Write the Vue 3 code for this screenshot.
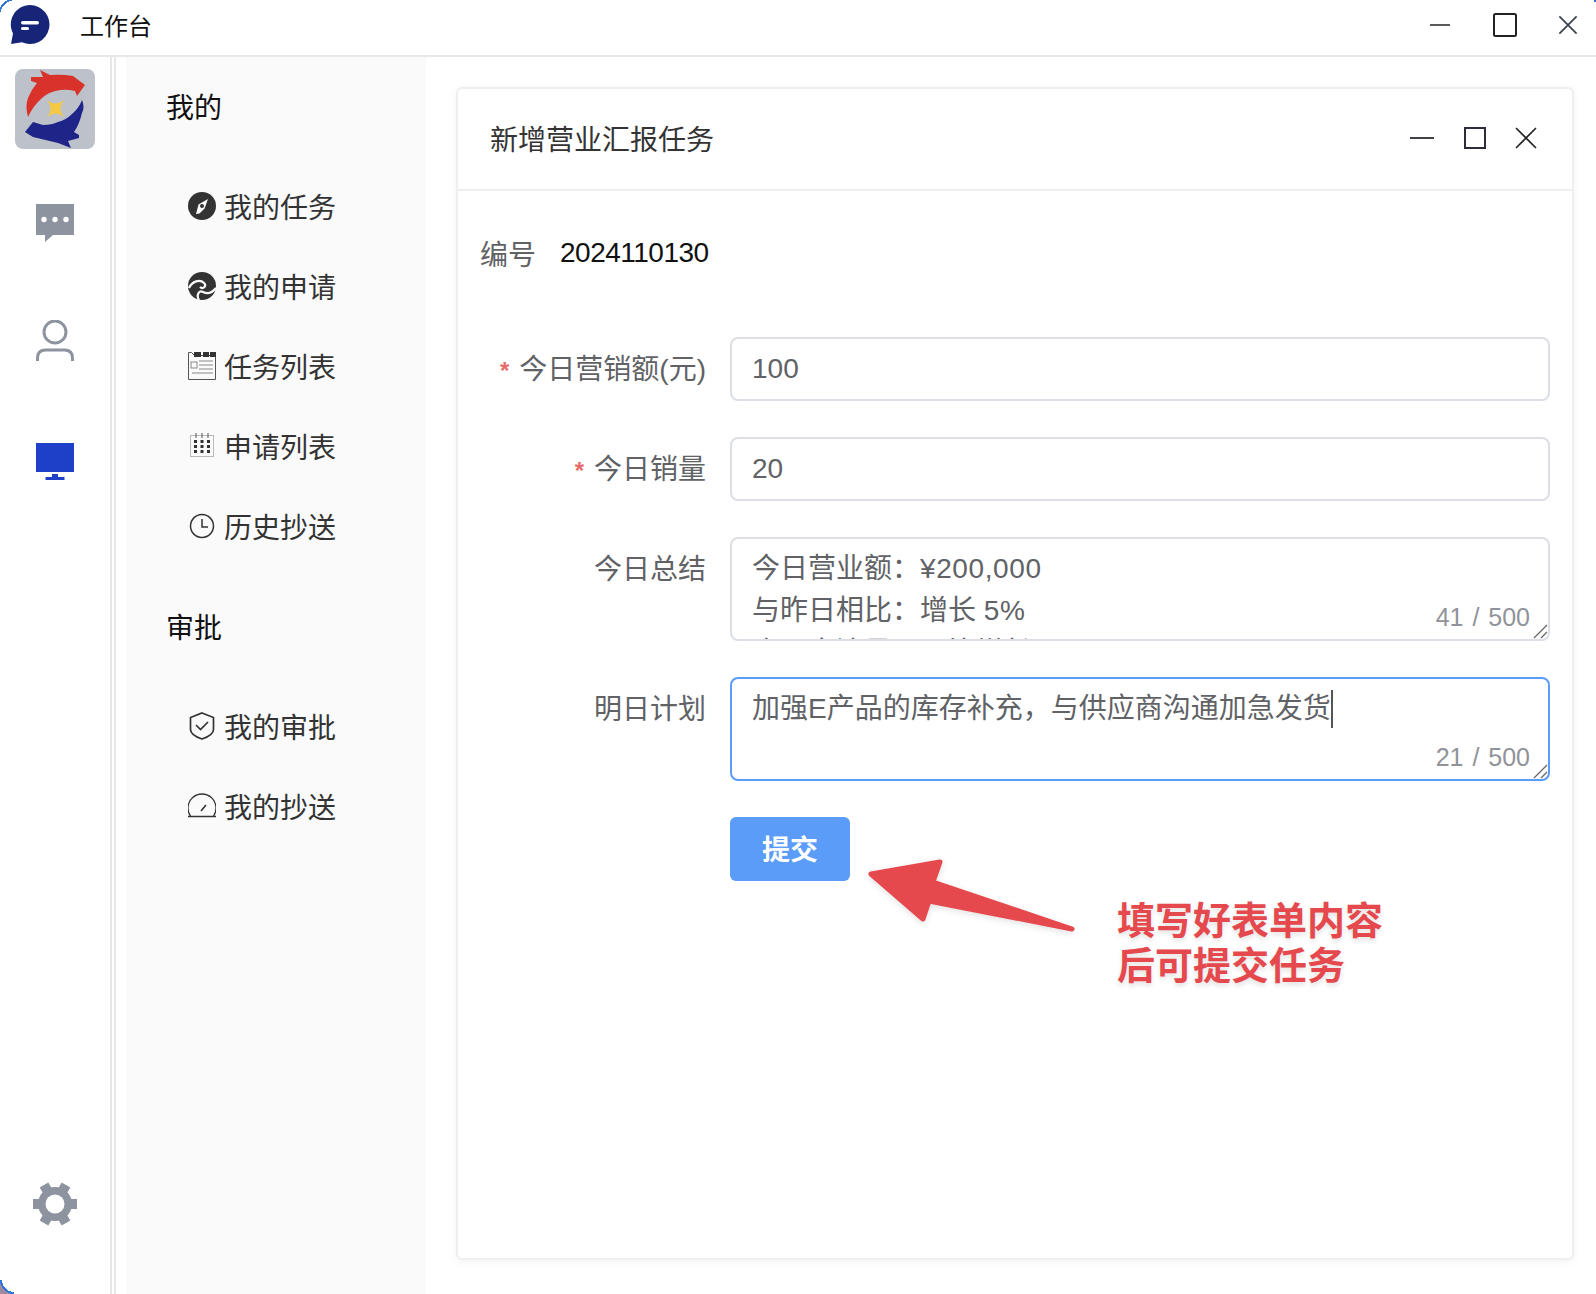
<script setup>
const mine = [
  { label: "我的任务", icon: "compass" },
  { label: "我的申请", icon: "swirl" },
  { label: "任务列表", icon: "list" },
  { label: "申请列表", icon: "calendar" },
  { label: "历史抄送", icon: "clock" },
];
const approval = [
  { label: "我的审批", icon: "shield" },
  { label: "我的抄送", icon: "gauge" },
];
const groups = [
  { title: "我的", items: mine },
  { title: "审批", items: approval },
];
</script>

<template>
  <div class="window">
    <header class="titlebar">
      <svg class="app-logo" viewBox="0 0 40 40">
        <path d="M20 0a19.500 19.500 0 1 1-8 37.300L1 39l2-10.500A19.500 19.500 0 0 1 20 0z" fill="#172578" />
        <rect x="11" y="16" width="18" height="3.400" rx="1.700" fill="#fff" />
        <rect x="11" y="22" width="8" height="3" rx="1.500" fill="#fff" />
      </svg>
      <span class="app-name">工作台</span>
      <div class="win-controls">
        <svg class="ctl ctl-min" viewBox="0 0 26 26"><path d="M3 13h20" stroke="#222" stroke-width="1.500" /></svg>
        <svg class="ctl" viewBox="0 0 26 26"><rect x="2" y="2" width="22" height="22" rx="1.500" fill="none" stroke="#222" stroke-width="2" /></svg>
        <svg class="ctl ctl-close" viewBox="0 0 26 26"><path d="M5 5l16 16M21 5L5 21" stroke="#3a4150" stroke-width="1.600" /></svg>
      </div>
    </header>

    <div class="main">
      <aside class="rail">
        <svg class="avatar" viewBox="15 69 80 80">
          <rect x="15" y="69" width="80" height="80" rx="8" fill="#bdc1ca" />
          <path d="M40 70L50 75Q62 74 73 76L85 85L77 96L75 91Q67 89 60 90Q48 92 42 98Q33 106 28 117Q25 106 28 98Q31 90 37 83L31 81V77L43 77z" fill="#d8322a" />
          <path d="M82 100Q85 107 82 113Q79 125 74 132L79 135V138L68 141L71 148L58 143L33 137L25 132L33 122L43 125Q52 125 58 122Q66 120 72 114Q79 108 82 100z" fill="#1e2488" />
          <path d="M47 100Q55.500 107 64 100Q57 108.500 64 117Q55.500 110 47 117Q54 108.500 47 100z" fill="#f6c944" />
        </svg>
        <svg class="rail-icon chat" viewBox="0 0 38 40">
          <path d="M0 0h38v31H17l-8 7v-7H0z" fill="#8d949f" />
          <circle cx="8" cy="15.500" r="2.700" fill="#fff" /><circle cx="19" cy="15.500" r="2.700" fill="#fff" /><circle cx="30" cy="15.500" r="2.700" fill="#fff" />
        </svg>
        <svg class="rail-icon user" viewBox="0 0 38 42">
          <circle cx="19" cy="12" r="11" fill="none" stroke="#8d949f" stroke-width="3" />
          <path d="M1.500 41v-3q0-8 8-8h19q8 0 8 8v3" fill="none" stroke="#8d949f" stroke-width="3" />
        </svg>
        <svg class="rail-icon monitor" viewBox="0 0 38 38">
          <rect width="38" height="29" fill="#1e40c8" />
          <path d="M16 31h6v3h6.500v3h-19v-3H16z" fill="#1e40c8" />
        </svg>
        <svg class="rail-icon gear" viewBox="0 0 44 44">
          <g fill="#8d949f">
            <rect x="0" y="17" width="44" height="10" />
            <rect x="0" y="17" width="44" height="10" transform="rotate(60 22 22)" />
            <rect x="0" y="17" width="44" height="10" transform="rotate(120 22 22)" />
            <circle cx="22" cy="22" r="17" />
          </g>
          <circle cx="22" cy="22" r="9.500" fill="#fff" />
        </svg>
      </aside>
      <div class="divider"></div>

      <nav class="sidebar">
        <section v-for="group in groups" :key="group.title" class="group">
          <h3 class="group-title">{{ group.title }}</h3>
          <a v-for="item in group.items" :key="item.label" class="nav-item">
            <svg class="nav-icon" viewBox="0 0 28 28">
              <template v-if="item.icon === 'compass'">
                <circle cx="14" cy="14" r="14" fill="#333" />
                <path d="M20 7l-3.500 9.500-5 5L8 22l2.500-9.500z" fill="#fff" />
                <circle cx="14" cy="14" r="2" fill="#333" />
              </template>
              <template v-else-if="item.icon === 'swirl'">
                <circle cx="14" cy="14" r="14" fill="#333" />
                <path d="M1 16C4 9 12 7 16 11C19 14 15 18 12 15" fill="none" stroke="#fafafa" stroke-width="2.200" />
                <path d="M11 28C8 23 11 18 15 20C19 22 24 21 28 16" fill="none" stroke="#fafafa" stroke-width="2.200" />
              </template>
              <template v-else-if="item.icon === 'list'">
                <path d="M.5 27.500V.5h3l3 3h21v24z" fill="none" stroke="#555" stroke-width="1" />
                <path d="M6 0h7v5H6zM15 0h6v5h-6zM22 0h6v5h-6z" fill="#333" />
                <rect x="3" y="10" width="6" height="6" fill="none" stroke="#888" />
                <path d="M11 9h14M11 13h14M11 17h14M4 21h21" stroke="#888" stroke-width="1.200" />
              </template>
              <template v-else-if="item.icon === 'calendar'">
                <rect x="2.500" y="3.500" width="23" height="21" fill="none" stroke="#bbb" />
                <path d="M8 1v5M14 1v5M20 1v5" stroke="#555" />
                <path d="M6 8h3v3H6zM12.500 8h3v3h-3zM19 8h3v3h-3zM6 13h3v3H6zM12.500 13h3v3h-3zM19 13h3v3h-3zM6 18h3v3H6zM12.500 18h3v3h-3zM19 18h3v3h-3z" fill="#333" />
              </template>
              <template v-else-if="item.icon === 'clock'">
                <circle cx="14" cy="14" r="11.500" fill="none" stroke="#333" stroke-width="1.500" />
                <path d="M14 7v8h6" fill="none" stroke="#333" stroke-width="1.500" />
              </template>
              <template v-else-if="item.icon === 'shield'">
                <path d="M14 1l11.500 4.500v12c0 4-4 7-11.500 9.500C6.500 24.500 2.500 21.500 2.500 17.500v-12z" fill="none" stroke="#333" stroke-width="1.700" />
                <path d="M8 13l4.500 4.500L20 10" fill="none" stroke="#333" stroke-width="1.700" />
              </template>
              <template v-else>
                <path d="M2.500 24A14 14 0 1 1 25.500 24" fill="none" stroke="#333" stroke-width="1.300" />
                <path d="M0 24.500h28" stroke="#333" stroke-width="1.500" />
                <path d="M13 19l5-6" stroke="#333" stroke-width="1.600" />
              </template>
            </svg>
            <span>{{ item.label }}</span>
          </a>
        </section>
      </nav>

      <main class="content">
        <div class="card">
          <div class="card-head">
            <span class="card-title">新增营业汇报任务</span>
            <div class="card-controls">
              <svg class="card-ctl card-min" viewBox="0 0 24 24"><path d="M0 12h24" stroke="#2c2c3a" stroke-width="1.800" /></svg>
              <svg class="card-ctl" viewBox="0 0 24 24"><rect x="2" y="2" width="20" height="20" fill="none" stroke="#2c2c3a" stroke-width="2" /></svg>
              <svg class="card-ctl" viewBox="0 0 24 24"><path d="M2 2l20 20M22 2L2 22" stroke="#222" stroke-width="1.600" /></svg>
            </div>
          </div>
          <div class="card-body">
            <div class="serial"><span class="serial-label">编号</span><span class="serial-no">2024110130</span></div>
            <form class="form" @submit.prevent>
              <div class="row">
                <label class="label required">今日营销额(元)</label>
                <div class="input">100</div>
              </div>
              <div class="row">
                <label class="label required">今日销量</label>
                <div class="input">20</div>
              </div>
              <div class="row">
                <label class="label">今日总结</label>
                <div class="textarea">
                  <div class="textarea-text">
                    <div>今日营业额：<span class="num">¥200,000</span></div>
                    <div>与昨日相比：增长 <span class="num">5%</span></div>
                    <div>今日客流量：同比增长 10%</div>
                  </div>
                  <span class="count">41 / 500</span>
                  <svg class="grip" viewBox="0 0 16 16"><path d="M2 15L15 2M9 15l6-6" stroke="#666" stroke-width="1.300" /></svg>
                </div>
              </div>
              <div class="row">
                <label class="label">明日计划</label>
                <div class="textarea focused">
                  <div class="textarea-text">加强E产品的库存补充，与供应商沟通加急发货<span class="caret"></span></div>
                  <span class="count">21 / 500</span>
                  <svg class="grip" viewBox="0 0 16 16"><path d="M2 15L15 2M9 15l6-6" stroke="#666" stroke-width="1.300" /></svg>
                </div>
              </div>
              <div class="row">
                <span class="label"></span>
                <button class="submit" type="button">提交</button>
              </div>
            </form>
          </div>
        </div>
      </main>
    </div>

    <svg class="arrow" viewBox="860 850 225 90">
      <path d="M871 874L940 862L933 882L1072 929L929 901L923 919z" fill="#e5494d" stroke="#e5494d" stroke-width="5" stroke-linejoin="round" />
    </svg>
    <div class="note">填写好表单内容<br />后可提交任务</div>

    <div class="corner corner-tl"></div>
    <div class="corner corner-tr"></div>
    <div class="corner corner-bl"></div>
  </div>
</template>

<style>
html,
body {
  margin: 0;
  background: #fff;
}
</style>

<style scoped>
.window {
  position: relative;
  width: 1596px;
  height: 1294px;
  overflow: hidden;
  display: flex;
  flex-direction: column;
  background: #fff;
  font-family: "Liberation Sans", "Noto Sans CJK SC", sans-serif;
}

.titlebar {
  flex: none;
  height: 49px;
  padding: 0 14px 6px 10px;
  border-bottom: 2px solid #e8e8e8;
  display: flex;
  align-items: center;
}

.app-logo {
  width: 40px;
  height: 40px;
  margin-top: 1px;
}

.app-name {
  margin-left: 30px;
  font-size: 24px;
  color: #111;
}

.win-controls {
  margin-left: auto;
  display: flex;
  align-items: center;
  gap: 36px;
}

.ctl {
  width: 26px;
  height: 26px;
}

.ctl-min {
  margin-right: 3px;
}

.ctl-close {
  width: 28px;
  height: 28px;
}

.main {
  flex: 1;
  min-height: 0;
  display: flex;
}

.rail {
  flex: none;
  width: 110px;
  display: flex;
  flex-direction: column;
  align-items: center;
  padding-top: 12px;
  border-right: 2px solid #e8e8e8;
}

.avatar {
  width: 80px;
  height: 80px;
}

.rail-icon {
  width: 38px;
}

.chat {
  height: 40px;
  margin-top: 55px;
}

.user {
  height: 42px;
  margin-top: 76px;
}

.monitor {
  height: 38px;
  margin-top: 81px;
}

.gear {
  width: 44px;
  height: 44px;
  margin-top: auto;
  margin-bottom: 68px;
}

.divider {
  flex: none;
  width: 14px;
  background: linear-gradient(#e8e8e8, #e8e8e8) 2px 0 / 2px 100% no-repeat;
}

.sidebar {
  flex: none;
  width: 300px;
  background: #fafafa;
  padding: 32px 0 0 40px;
  box-sizing: border-box;
}

.group + .group {
  margin-top: 43px;
}

.group-title {
  margin: 0 0 37px;
  height: 40px;
  line-height: 40px;
  font-size: 28px;
  font-weight: 400;
  color: #111;
}

.nav-item {
  display: flex;
  align-items: center;
  height: 80px;
  margin-left: 22px;
  gap: 8px;
  font-size: 28px;
  color: #333;
}

.nav-icon {
  width: 28px;
  height: 28px;
  flex: none;
}

.content {
  flex: 1;
  min-width: 0;
  padding: 30px 22px 34px 30px;
  box-sizing: border-box;
}

.card {
  height: 100%;
  box-sizing: border-box;
  border: 2px solid #efefef;
  border-radius: 6px;
  background: #fff;
  box-shadow: 0 2px 8px rgba(0, 0, 0, 0.05);
}

.card-head {
  height: 98px;
  display: flex;
  align-items: center;
  padding: 0 34px 2px 32px;
  border-bottom: 2px solid #efefef;
}

.card-title {
  font-size: 28px;
  color: #333;
}

.card-controls {
  margin-left: auto;
  display: flex;
  align-items: center;
  gap: 27px;
}

.card-ctl {
  width: 24px;
  height: 24px;
}

.card-min {
  margin-right: 2px;
}

.card-body {
  padding: 41px 22px 0 22px;
}

.serial {
  display: flex;
  height: 42px;
  align-items: center;
  margin-bottom: 63px;
  font-size: 28px;
}

.serial-label {
  color: #606266;
}

.serial-no {
  margin-left: 24px;
  letter-spacing: -0.5px;
  color: #111;
}

.form {
  display: flex;
  flex-direction: column;
  gap: 36px;
}

.row {
  display: flex;
  gap: 24px;
}

.label {
  flex: none;
  width: 226px;
  height: 63px;
  line-height: 66px;
  font-size: 28px;
  color: #606266;
  text-align: right;
}

.required::before {
  content: "*";
  color: #e86a6a;
  margin-right: 10px;
  font-size: 24px;
  font-weight: 700;
}

.input,
.textarea {
  flex: 1;
  position: relative;
  box-sizing: border-box;
  border: 2px solid #dcdfe6;
  border-radius: 8px;
  font-size: 28px;
  color: #606266;
}

.input {
  height: 64px;
  line-height: 60px;
  padding: 0 20px;
}

.textarea {
  height: 104px;
  overflow: hidden;
}

.textarea.focused {
  border-color: #5a9cf8;
}

.textarea-text {
  padding: 9px 20px 0;
  line-height: 42px;
}

.num {
  letter-spacing: 0.6px;
}

.caret {
  display: inline-block;
  width: 2px;
  height: 38px;
  background: #555;
  vertical-align: middle;
  margin-top: -4px;
}

.count {
  position: absolute;
  right: 18px;
  bottom: 6px;
  font-size: 25px;
  line-height: 32px;
  word-spacing: 2px;
  color: #909399;
  background: #fff;
}

.grip {
  position: absolute;
  right: 0;
  bottom: 0;
  width: 16px;
  height: 16px;
}

.submit {
  width: 120px;
  height: 64px;
  padding: 0 0 3px;
  border: 0;
  border-radius: 6px;
  background: #5a9cf8;
  color: #fff;
  font-family: inherit;
  font-size: 28px;
  font-weight: 700;
}

.arrow {
  position: absolute;
  left: 860px;
  top: 850px;
  width: 225px;
  height: 90px;
  filter: drop-shadow(0 2px 3px rgba(0, 0, 0, 0.12));
}

.note {
  position: absolute;
  left: 1117px;
  top: 899px;
  font-size: 38px;
  line-height: 45px;
  font-weight: 700;
  color: #e5494d;
  text-shadow: 0 3px 5px rgba(0, 0, 0, 0.12);
}

.corner {
  position: absolute;
}

.corner-tl {
  left: 0;
  top: 0;
  width: 12px;
  height: 12px;
  background: radial-gradient(circle at 16px 16px, transparent 16px, #2f76d8 16px, #2f76d8 18px, #fff 18px);
}

.corner-tr {
  right: 0;
  top: 0;
  width: 2px;
  height: 2px;
  background: #2f76d8;
}

.corner-bl {
  left: 0;
  bottom: 0;
  width: 14px;
  height: 14px;
  background: radial-gradient(circle at 14px 0, transparent 12px, #2f76d8 12px, #2f76d8 14px, #a08a9f 14px);
}
</style>
